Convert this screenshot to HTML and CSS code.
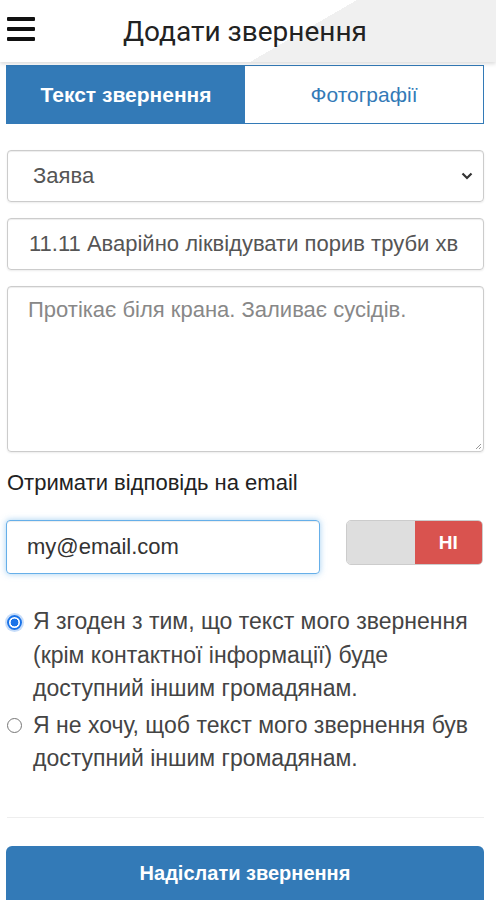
FILE: index.html
```html
<!DOCTYPE html>
<html lang="uk">
<head>
<meta charset="utf-8">
<title>Додати звернення</title>
<link rel="stylesheet" href="styles.css">
</head>
<body>
<header class="topbar">
  <button class="menu-btn" aria-label="Меню">
    <span></span><span></span><span></span>
  </button>
  <h1 class="title">Додати звернення</h1>
</header>
<main class="content">
  <div class="tabs">
    <div class="tab tab-active">Текст звернення</div>
    <div class="tab">Фотографії</div>
  </div>
  <div class="field select-field">
    <span>Заява</span>
    <svg class="chevron" width="12" height="8" viewBox="0 0 12 8"><path d="M1.5 1.5 L6 6 L10.5 1.5" fill="none" stroke="#333" stroke-width="2.2"/></svg>
  </div>
  <div class="field">11.11 Аварійно ліквідувати порив труби хв</div>
  <div class="field textarea">
    <span class="placeholder">Протікає біля крана. Заливає сусідів.</span>
    <svg class="grip" width="8" height="8" viewBox="0 0 8 8"><path d="M7 2 L2 7 M7 5 L5 7" stroke="#999" stroke-width="1"/></svg>
  </div>
  <div class="label">Отримати відповідь на email</div>
  <div class="email-row">
    <div class="field email">my@email.com</div>
    <div class="toggle"><span class="toggle-off"></span><span class="toggle-no">НІ</span></div>
  </div>
  <div class="radios">
    <label class="radio"><span class="dot dot-on"></span><span class="rtext">Я згоден з тим, що текст мого звернення (крім контактної інформації) буде доступний іншим громадянам.</span></label>
    <label class="radio"><span class="dot"></span><span class="rtext">Я не хочу, щоб текст мого звернення був доступний іншим громадянам.</span></label>
  </div>
  <hr class="sep">
  <div class="submit">Надіслати звернення</div>
</main>
</body>
</html>
```
FILE: styles.css
```css
* { box-sizing: border-box; }
html, body { margin: 0; padding: 0; }
body {
  width: 496px;
  height: 900px;
  overflow: hidden;
  background: #fff;
  font-family: "Liberation Sans", Arial, sans-serif;
  color: #333;
}
.topbar {
  height: 62px;
  display: flex;
  align-items: center;
  background: linear-gradient(149.9deg, #fff 179px, #f0f0f0 179px);
  box-shadow: 0 2px 4px rgba(0,0,0,0.14);
  position: relative;
  z-index: 2;
}
.menu-btn {
  align-self: flex-start;
  border: 0;
  background: none;
  padding: 0;
  margin: 17px 0 0 7px;
  width: 28px;
  height: 23.5px;
  display: flex;
  flex-direction: column;
  justify-content: space-between;
}
.menu-btn span {
  display: block;
  height: 3.5px;
  width: 28px;
  background: #111;
  border-radius: 1px;
}
.title {
  margin: 0 0 0 88px;
  font-family: Roboto, "Liberation Sans", sans-serif;
  font-weight: 400;
  font-size: 28px;
  color: #222;
  padding-top: 0;
}
.content {
  padding: 3px 12px 0 6px;
}
.tabs {
  display: flex;
  height: 59px;
  border: 1px solid #337ab7;
}
.tab {
  flex: 1;
  display: flex;
  align-items: center;
  justify-content: center;
  font-size: 21px;
  color: #337ab7;
}
.tab-active {
  background: #337ab7;
  color: #fff;
  font-weight: bold;
}
.field {
  border: 1px solid #ccc;
  border-radius: 4px;
  box-shadow: inset 0 1px 1px rgba(0,0,0,0.075), 0 1px 2px rgba(0,0,0,0.08);
  height: 52px;
  display: flex;
  align-items: center;
  padding: 0 21px;
  font-size: 22px;
  color: #555;
  margin: 0 0 16px 1px;
  white-space: nowrap;
  overflow: hidden;
}
.select-field {
  margin-top: 26px;
  justify-content: space-between;
  padding: 0 10px 0 25px;
}
.textarea {
  height: 166px;
  align-items: flex-start;
  padding: 10px 20px;
  position: relative;
}
.placeholder { color: #888; }
.grip { position: absolute; right: 1px; bottom: 1px; }
.label {
  font-size: 22px;
  line-height: 24px;
  color: #222;
  margin: 19px 0 0 1px;
  height: 24px;
}
.email-row {
  display: flex;
  align-items: flex-start;
  margin-top: 25px;
  gap: 26px;
}
.email {
  width: 314px;
  height: 54px;
  border-color: #66afe9;
  box-shadow: inset 0 1px 1px rgba(0,0,0,0.075), 0 0 6px rgba(102,175,233,0.6);
  font-size: 22px;
  color: #333;
  padding: 0 20px;
  margin: 0;
}
.toggle {
  display: flex;
  width: 137px;
  height: 45px;
  border-radius: 5px;
  overflow: hidden;
  border: 1px solid #ccc;
}
.toggle-off { flex: 1; background: #dedede; }
.toggle-no {
  flex: 1;
  background: #d9534f;
  color: #fff;
  font-weight: bold;
  font-size: 19px;
  display: flex;
  align-items: center;
  justify-content: center;
}
.radios {
  margin-top: 31px;
  display: flex;
  flex-direction: column;
  gap: 3px;
}
.radio {
  display: flex;
  align-items: flex-start;
  font-size: 23px;
  line-height: 33.5px;
  color: #444;
}
.rtext { margin-left: 11px; }
.dot {
  flex: none;
  width: 15px;
  height: 15px;
  margin: 9.5px 0 0 1px;
  border-radius: 50%;
  border: 1px solid #777;
  background: #fff;
}
.dot-on {
  border: 2px solid #1a73e8;
  background: radial-gradient(circle, #1a73e8 0 3.6px, #fff 4.2px);
  box-shadow: 0 0 0 2px rgba(26,115,232,0.25);
}
.sep {
  border: 0;
  border-top: 1px solid #eee;
  margin: 41px 0 0 1px;
}
.submit {
  margin-top: 28px;
  height: 60px;
  background: #337ab7;
  border-radius: 6px 6px 0 0;
  color: #fff;
  font-weight: bold;
  font-size: 20px;
  display: flex;
  align-items: center;
  justify-content: center;
  padding-bottom: 4px;
}
```
